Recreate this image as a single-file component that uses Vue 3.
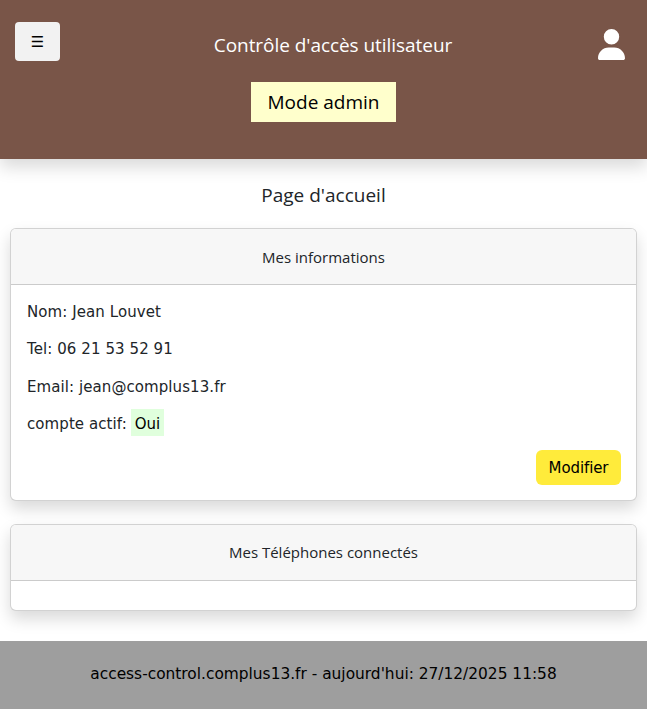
<script setup>
const rows = [
  { label: 'Nom: Jean Louvet' },
  { label: 'Tel: 06 21 53 52 91' },
  { label: 'Email: jean@complus13.fr' },
]
</script>

<template>
  <div class="page">
    <header class="topbar">
      <div class="toprow">
        <button class="burger">☰</button>
        <div class="title">Contrôle d'accès utilisateur</div>
        <svg class="user" viewBox="0 0 448 512" fill="#fff">
          <path d="M224 256A128 128 0 1 0 224 0a128 128 0 1 0 0 256zm-45.7 48C79.8 304 0 383.8 0 482.3C0 498.7 13.3 512 29.7 512H418.3c16.4 0 29.7-13.3 29.7-29.7C448 383.8 368.2 304 269.7 304H178.3z"/>
        </svg>
      </div>
      <div class="mode">Mode admin</div>
    </header>

    <main class="main">
      <h1 class="pagetitle">Page d'accueil</h1>

      <section class="card">
        <div class="card-head">Mes informations</div>
        <div class="card-body">
          <p v-for="r in rows" :key="r.label" class="line">{{ r.label }}</p>
          <p class="line last">compte actif: <span class="ok">Oui</span></p>
          <div class="actions"><button class="edit">Modifier</button></div>
        </div>
      </section>

      <section class="card second">
        <div class="card-head">Mes Téléphones connectés</div>
        <div class="card-empty"></div>
      </section>
    </main>

    <footer class="footer">access-control.complus13.fr - aujourd'hui: 27/12/2025 11:58</footer>
  </div>
</template>

<style>
html, body { margin: 0; background: #fff; }
</style>

<style scoped>
.page {
  min-height: 709px;
  display: flex;
  flex-direction: column;
  font-family: "Open Sans", "Noto Sans", sans-serif;
  color: #212529;
}
.topbar {
  height: 159px;
  box-sizing: border-box;
  background: #795548;
  padding: 22px 15px 0;
  box-shadow: 0 8px 16px rgba(0, 0, 0, 0.15);
  position: relative;
}
.toprow {
  display: flex;
  align-items: flex-start;
  justify-content: space-between;
  height: 60px;
}
.burger {
  width: 45px;
  height: 39px;
  border: none;
  border-radius: 4px;
  background: #f2f2f2;
  color: #000;
  font-size: 15px;
  font-family: "DejaVu Sans", sans-serif;
  padding: 0;
}
.title {
  color: #fff;
  font-size: 19px;
  line-height: 24px;
  margin-top: 11px;
  margin-left: 8px;
  letter-spacing: -0.05px;
}
.user {
  width: 27px;
  height: 31px;
  margin-top: 7px;
  margin-right: 7px;
}
.mode {
  width: 145px;
  height: 40px;
  margin: 0 auto;
  background: #ffffcc;
  color: #000;
  font-size: 19px;
  line-height: 40px;
  text-align: center;
}
.main {
  flex: 1;
  padding: 0 10px;
}
.pagetitle {
  margin: 24px 0 20px;
  font-size: 19px;
  line-height: 25px;
  font-weight: 400;
  text-align: center;
}
.card {
  border: 1px solid rgba(0, 0, 0, 0.175);
  border-radius: 6px;
  background: #fff;
  box-shadow: 0 8px 16px rgba(0, 0, 0, 0.15);
  overflow: hidden;
}
.second { margin-top: 23px; }
.card-head {
  height: 55px;
  background: #f7f7f7;
  border-bottom: 1px solid rgba(0, 0, 0, 0.175);
  font-size: 15px;
  line-height: 57px;
  text-align: center;
}
.second .card-head { line-height: 55px; }
.card-body {
  padding: 16px 15px 15px 16px;
  font-family: "DejaVu Sans", sans-serif;
  font-size: 15px;
}
.line {
  margin: 0 0 15.4px;
  line-height: 22px;
  letter-spacing: 0.08px;
}
.last { margin-bottom: 15px; }
.ok {
  background: #e0ffdd;
  color: #000;
  padding: 6px 4px 3px;
  margin-left: -1px;
}
.actions {
  display: flex;
  justify-content: flex-end;
}
.edit {
  width: 85px;
  height: 35px;
  border: none;
  border-radius: 6px;
  background: #ffeb3b;
  color: #000;
  font-family: "DejaVu Sans", sans-serif;
  font-size: 15px;
  letter-spacing: -0.1px;
  padding: 0;
}
.card-empty { height: 29px; }
.footer {
  margin-top: 30px;
  height: 68px;
  background: #9e9e9e;
  color: #000;
  font-family: "DejaVu Sans", sans-serif;
  font-size: 15.4px;
  line-height: 67px;
  text-align: center;
}
</style>
